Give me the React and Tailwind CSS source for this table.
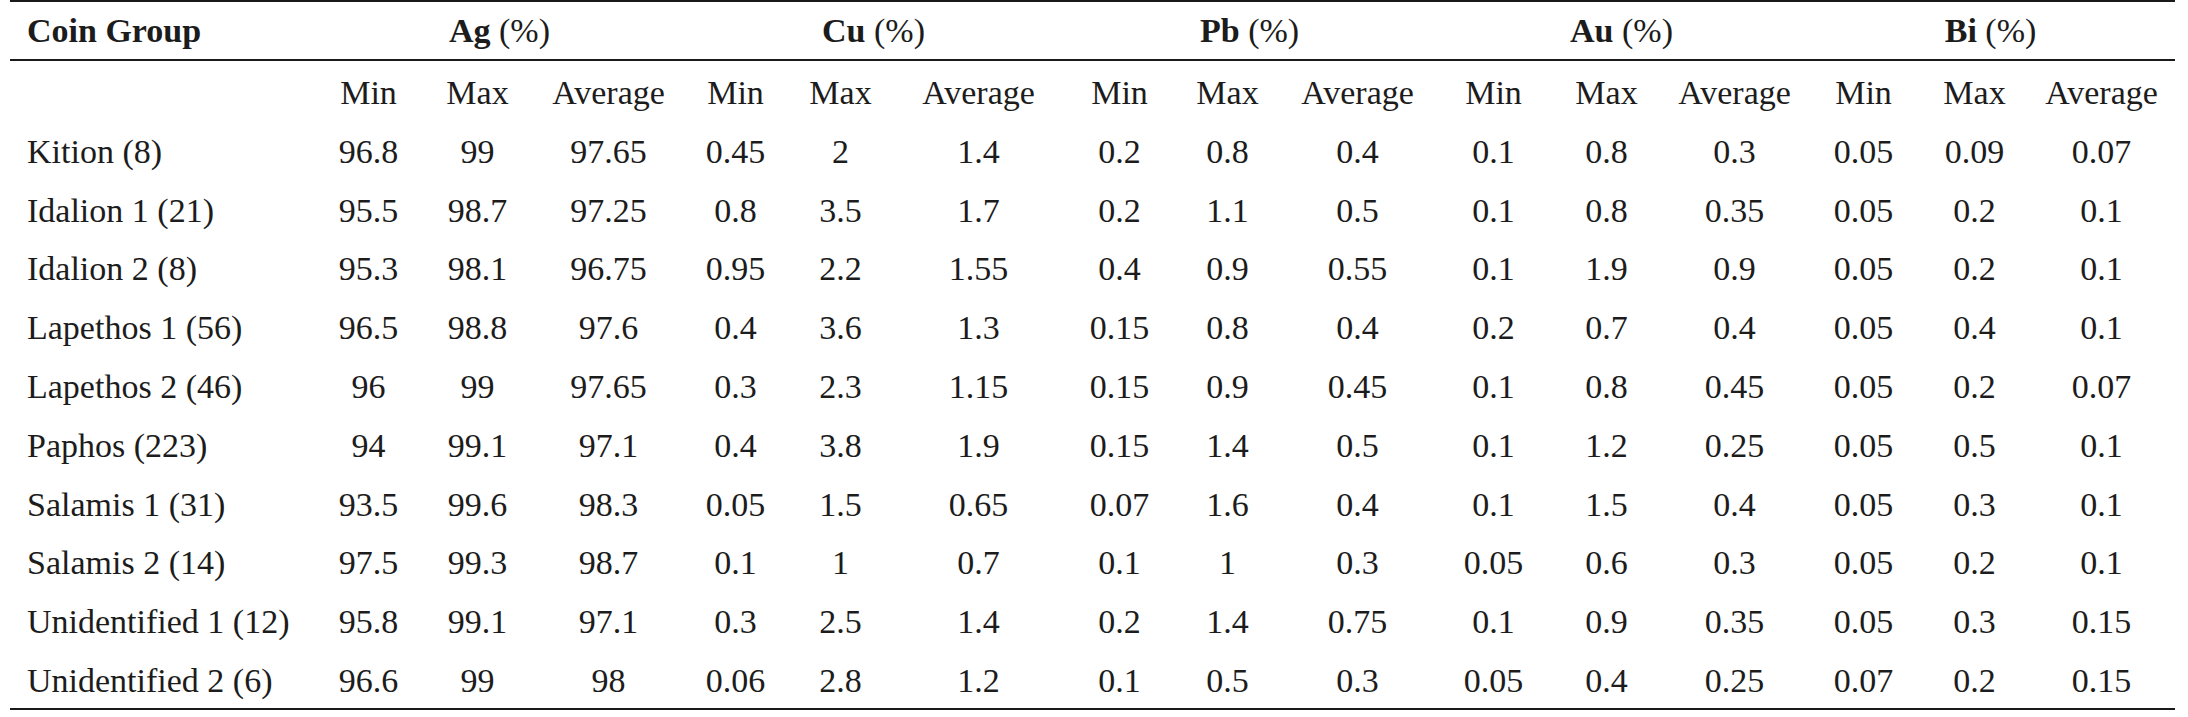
import React from 'react';

const metals = ['Ag', 'Cu', 'Pb', 'Au', 'Bi'];

// column widths so the sub-columns land where the printed table has them
const colWidths = [304, 109, 109, 153, 101, 109, 167, 115, 101, 159, 113, 113, 143, 115, 107, 147];

const rows = [
  ['Kition (8)', '96.8', '99', '97.65', '0.45', '2', '1.4', '0.2', '0.8', '0.4', '0.1', '0.8', '0.3', '0.05', '0.09', '0.07'],
  ['Idalion 1 (21)', '95.5', '98.7', '97.25', '0.8', '3.5', '1.7', '0.2', '1.1', '0.5', '0.1', '0.8', '0.35', '0.05', '0.2', '0.1'],
  ['Idalion 2 (8)', '95.3', '98.1', '96.75', '0.95', '2.2', '1.55', '0.4', '0.9', '0.55', '0.1', '1.9', '0.9', '0.05', '0.2', '0.1'],
  ['Lapethos 1 (56)', '96.5', '98.8', '97.6', '0.4', '3.6', '1.3', '0.15', '0.8', '0.4', '0.2', '0.7', '0.4', '0.05', '0.4', '0.1'],
  ['Lapethos 2 (46)', '96', '99', '97.65', '0.3', '2.3', '1.15', '0.15', '0.9', '0.45', '0.1', '0.8', '0.45', '0.05', '0.2', '0.07'],
  ['Paphos (223)', '94', '99.1', '97.1', '0.4', '3.8', '1.9', '0.15', '1.4', '0.5', '0.1', '1.2', '0.25', '0.05', '0.5', '0.1'],
  ['Salamis 1 (31)', '93.5', '99.6', '98.3', '0.05', '1.5', '0.65', '0.07', '1.6', '0.4', '0.1', '1.5', '0.4', '0.05', '0.3', '0.1'],
  ['Salamis 2 (14)', '97.5', '99.3', '98.7', '0.1', '1', '0.7', '0.1', '1', '0.3', '0.05', '0.6', '0.3', '0.05', '0.2', '0.1'],
  ['Unidentified 1 (12)', '95.8', '99.1', '97.1', '0.3', '2.5', '1.4', '0.2', '1.4', '0.75', '0.1', '0.9', '0.35', '0.05', '0.3', '0.15'],
  ['Unidentified 2 (6)', '96.6', '99', '98', '0.06', '2.8', '1.2', '0.1', '0.5', '0.3', '0.05', '0.4', '0.25', '0.07', '0.2', '0.15'],
];

export default function App() {
  return (
    <div className="bg-white min-h-screen pl-[10px]" style={{ fontFamily: '"Liberation Serif", "Times New Roman", serif' }}>
      <table className="table-fixed border-collapse w-[2165px] text-[34px] text-[#1c1c1c] border-t-2 border-b-2 border-[#1a1a1a]">
        <colgroup>
          {colWidths.map((w, i) => (
            <col key={i} style={{ width: w }} />
          ))}
        </colgroup>
        <thead>
          <tr className="border-b-2 border-[#1a1a1a]">
            <th className="text-left font-bold leading-[57px] pl-[17px] p-0">Coin Group</th>
            {metals.map((m) => (
              <th key={m} colSpan={3} className="text-center font-bold leading-[57px] p-0">
                {m} <span className="font-normal">(%)</span>
              </th>
            ))}
          </tr>
          <tr>
            <th className="p-0 pt-[6px] leading-[52.8px]"></th>
            {metals.map((m) => (
              <React.Fragment key={m}>
                <th className="font-normal text-center pt-[6px] leading-[52.8px] px-0 pb-0">Min</th>
                <th className="font-normal text-center pt-[6px] leading-[52.8px] px-0 pb-0">Max</th>
                <th className="font-normal text-center pt-[6px] leading-[52.8px] px-0 pb-0">Average</th>
              </React.Fragment>
            ))}
          </tr>
        </thead>
        <tbody>
          {rows.map((r) => (
            <tr key={r[0]}>
              {r.map((cell, i) => (
                <td
                  key={i}
                  className={
                    i === 0
                      ? 'text-left pl-[17px] pr-0 pt-[6px] pb-0 leading-[52.8px] whitespace-nowrap'
                      : 'text-center px-0 pt-[6px] pb-0 leading-[52.8px]'
                  }
                >
                  {cell}
                </td>
              ))}
            </tr>
          ))}
        </tbody>
      </table>
    </div>
  );
}
